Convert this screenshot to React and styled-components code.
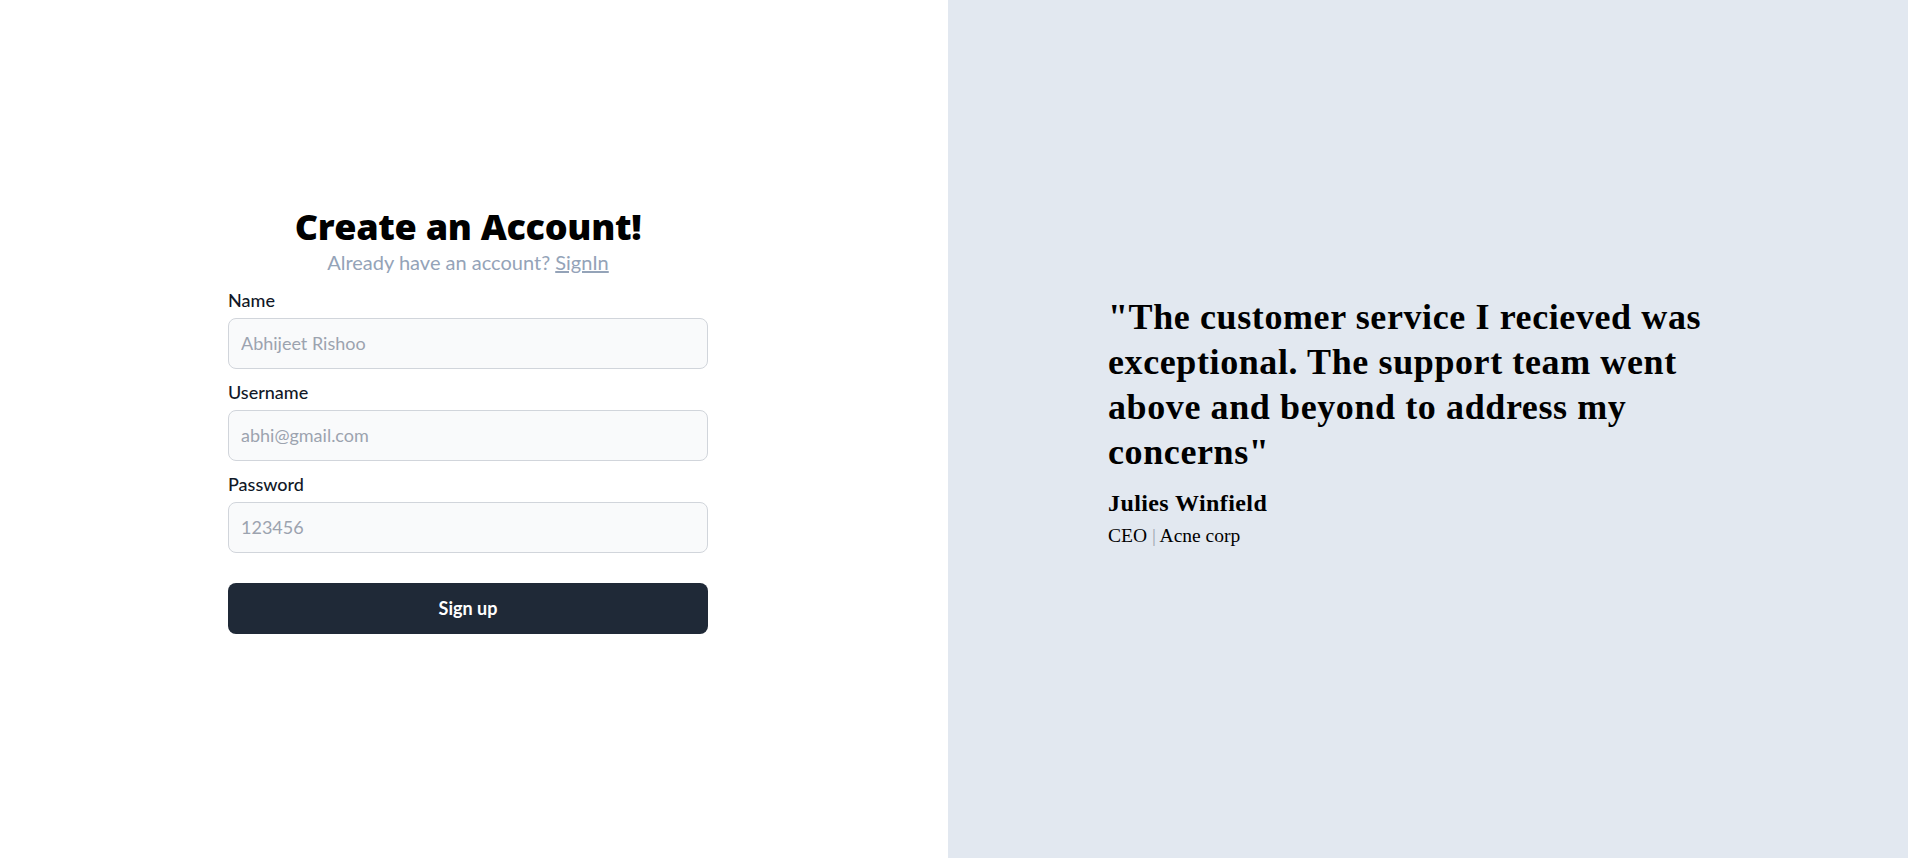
import React from "react";
import styled, { createGlobalStyle } from "styled-components";

const GlobalStyle = createGlobalStyle`
  * { box-sizing: border-box; }
  html, body { margin: 0; padding: 0; }
  body {
    font-family: Lato, "Noto Sans", sans-serif;
    background: #ffffff;
  }
`;

const fields = [
  { label: "Name", placeholder: "Abhijeet Rishoo", type: "text" },
  { label: "Username", placeholder: "abhi@gmail.com", type: "text" },
  { label: "Password", placeholder: "123456", type: "password" },
];

const Signup = () => {
  return (
    <Page>
      <GlobalStyle />
      <FormSide>
        <FormBox>
          <Heading>Create an Account!</Heading>
          <SubText>
            Already have an account? <SignInLink href="#">SignIn</SignInLink>
          </SubText>
          <Form onSubmit={(e) => e.preventDefault()}>
            {fields.map((f) => (
              <Field key={f.label}>
                <Label>{f.label}</Label>
                <Input type={f.type} placeholder={f.placeholder} />
              </Field>
            ))}
            <SubmitButton type="submit">Sign up</SubmitButton>
          </Form>
        </FormBox>
      </FormSide>
      <QuoteSide>
        <QuoteBox>
          <Quote>
            "The customer service I recieved was exceptional. The support team
            went above and beyond to address my concerns"
          </Quote>
          <Author>Julies Winfield</Author>
          <Role>
            CEO <Divider>|</Divider> Acne corp
          </Role>
        </QuoteBox>
      </QuoteSide>
    </Page>
  );
};

var Page = styled.div`
  display: flex;
  width: 100vw;
  height: 100vh;
`;

var FormSide = styled.div`
  width: 948px;
  display: flex;
  justify-content: center;
  align-items: center;
  padding-right: 12px;
  padding-bottom: 18px;
  background: #ffffff;
`;

var FormBox = styled.div`
  width: 480px;
  display: flex;
  flex-direction: column;
`;

var Heading = styled.h1`
  margin: 0;
  text-align: center;
  font-family: "Open Sans", "Noto Sans", sans-serif;
  font-size: 36px;
  line-height: 40px;
  font-weight: 800;
  letter-spacing: -0.3px;
  color: #000000;
`;

var SubText = styled.div`
  margin-top: 1px;
  text-align: center;
  font-size: 20px;
  line-height: 28px;
  color: #94a3b8;
`;

var SignInLink = styled.a`
  color: #94a3b8;
  text-decoration: underline;
`;

var Form = styled.form`
  display: flex;
  flex-direction: column;
  gap: 9px;
  margin-top: 10px;
`;

var Field = styled.div`
  display: flex;
  flex-direction: column;
  gap: 4px;
`;

var Label = styled.label`
  font-size: 18px;
  line-height: 28px;
  font-weight: 500;
  color: #111827;
`;

var Input = styled.input`
  width: 100%;
  height: 51px;
  padding: 10px 12px;
  font-family: inherit;
  font-size: 18px;
  line-height: 28px;
  color: #111827;
  background: #f9fafb;
  border: 1px solid #d1d5db;
  border-radius: 8px;
  outline: none;
  &::placeholder {
    color: #9ca3af;
  }
`;

var SubmitButton = styled.button`
  margin-top: 21px;
  width: 100%;
  height: 51px;
  border: none;
  border-radius: 8px;
  background: #1f2937;
  color: #ffffff;
  font-family: inherit;
  font-size: 18px;
  font-weight: 700;
  cursor: pointer;
  &:hover {
    background: #111827;
  }
`;

var QuoteSide = styled.div`
  flex: 1;
  display: flex;
  align-items: center;
  padding-left: 160px;
  padding-bottom: 14px;
  background: #e2e8f0;
`;

var QuoteBox = styled.div`
  max-width: 630px;
  font-family: "Liberation Serif", "Times New Roman", serif;
  color: #000000;
`;

var Quote = styled.div`
  font-size: 36px;
  line-height: 45px;
  font-weight: 700;
  letter-spacing: 0.6px;
`;

var Author = styled.div`
  margin-top: 12px;
  font-size: 24px;
  line-height: 32px;
  font-weight: 700;
  letter-spacing: 0.4px;
`;

var Role = styled.div`
  margin-top: 3px;
  font-size: 19.5px;
  line-height: 28px;
`;

var Divider = styled.span`
  color: #9ca3af;
`;

export default Signup;
